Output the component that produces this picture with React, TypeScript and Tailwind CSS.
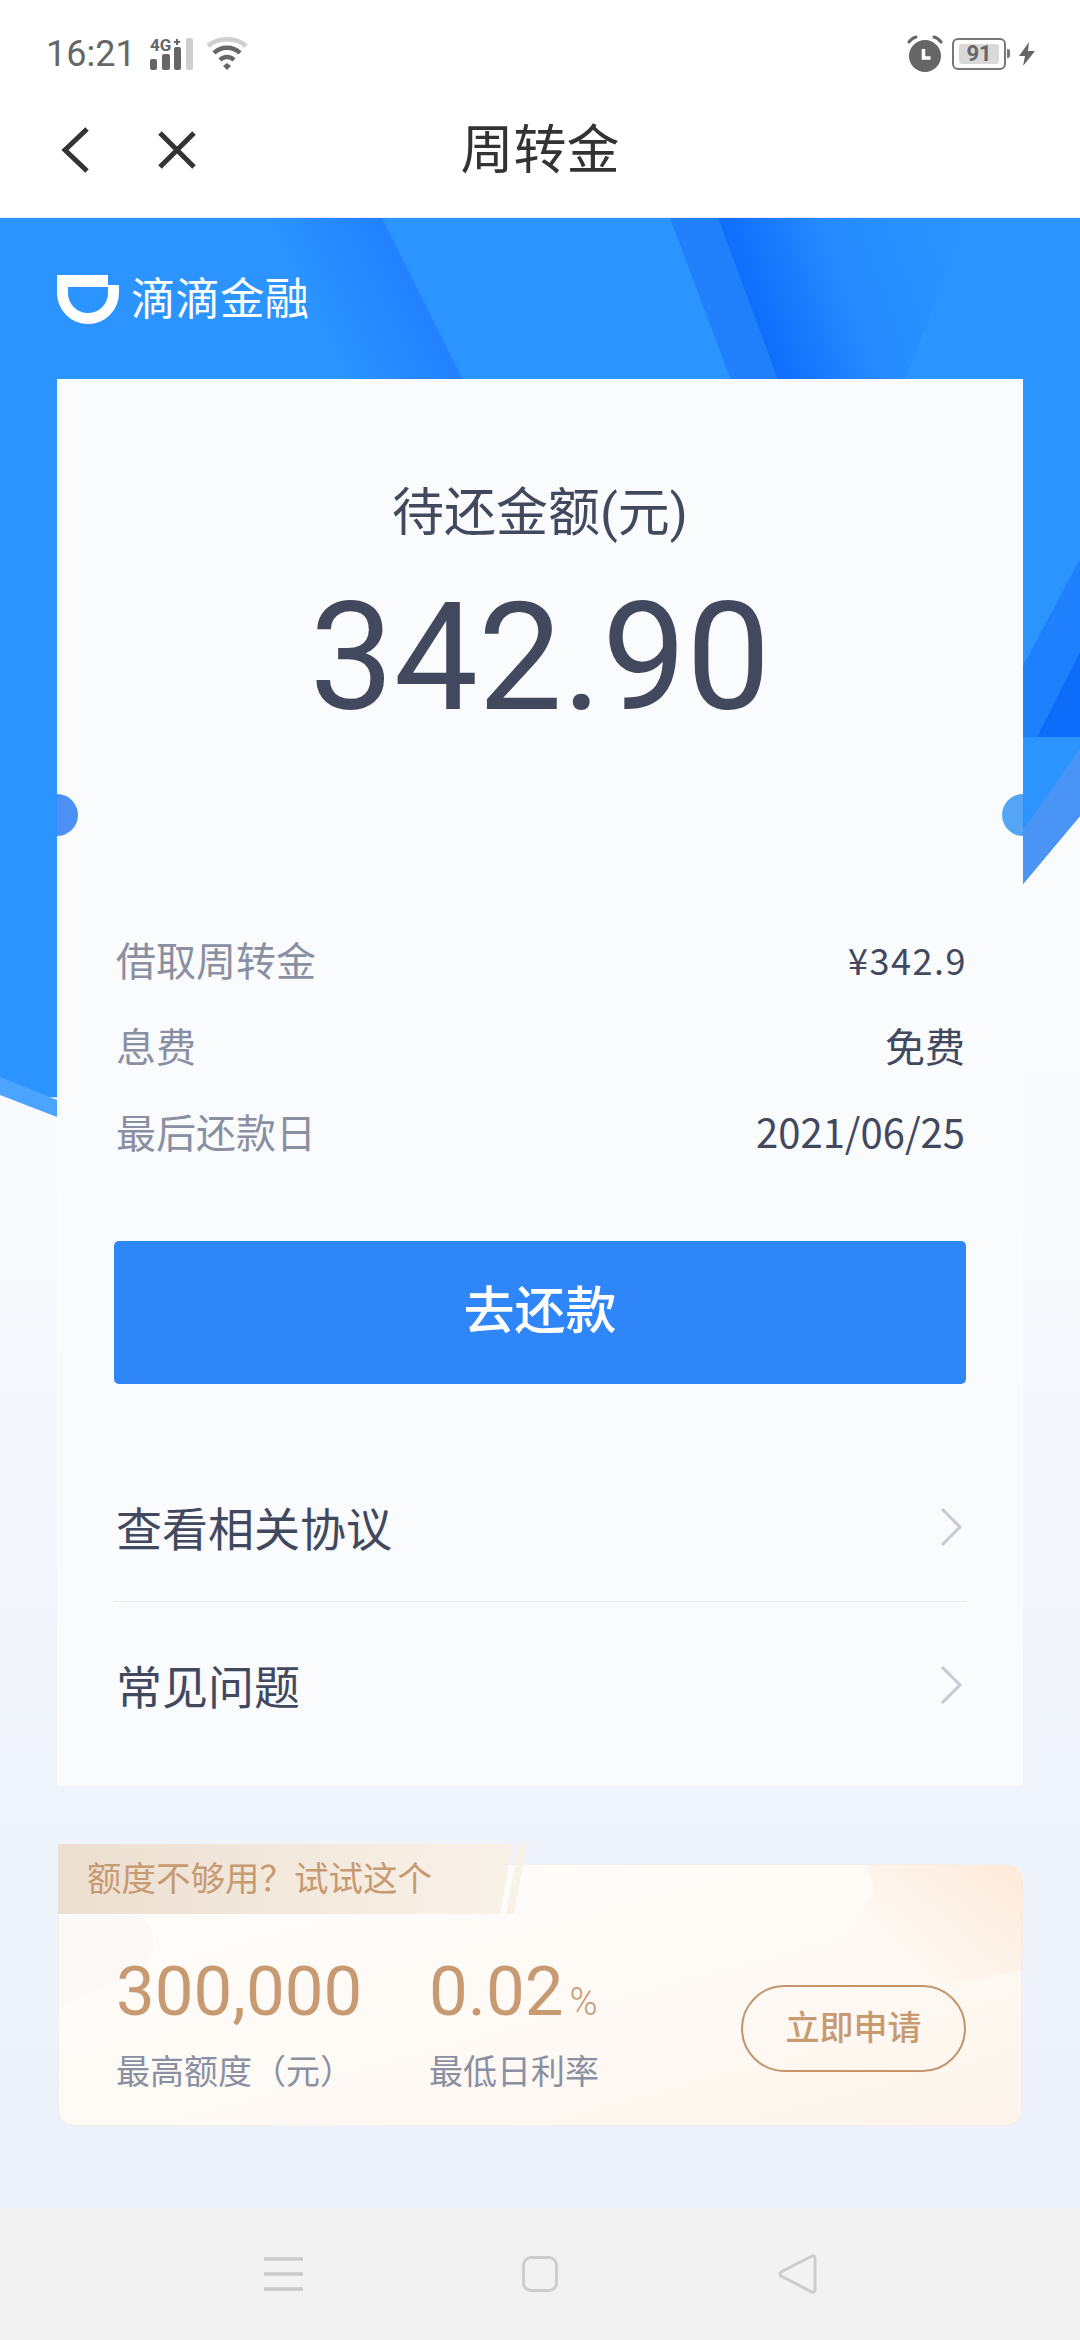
const details = [
  { label: '借取周转金', value: '¥342.9', valueClass: 'mr-[-2px] text-[36px] tracking-[1.5px] text-[#42495f]' },
  { label: '息费', value: '免费', valueClass: 'text-[40px] text-[#42495f]' },
  { label: '最后还款日', value: '2021/06/25', valueClass: 'text-[40px] text-[#42495f]' },
];

const links = ['查看相关协议', '常见问题'];

const StatusBar = () => (
  <div className="flex h-[72px] items-start justify-between pl-[46px] pr-[45px] pt-[35px] text-[#666666]">
    <div className="flex items-center">
      <span className="text-[36px] leading-[38px]">16:21</span>
      <svg width="44" height="42" viewBox="0 -10 44 42" className="ml-[14px] mt-[-10px]">
        <text x="0" y="13" fontSize="17" fontWeight="700" fontFamily="Roboto" fill="#666666">4G</text>
        <path d="M24 4h6M27 1v6" stroke="#666666" strokeWidth="2" />
        <rect x="0" y="21" width="7" height="11" rx="2" fill="#666666" />
        <rect x="12" y="16" width="8" height="16" rx="2" fill="#666666" />
        <rect x="24" y="9" width="7" height="23" rx="2" fill="#666666" />
        <rect x="36" y="0" width="7" height="32" rx="2" fill="#cfcfcf" />
      </svg>
      <svg width="42" height="34" viewBox="0 0 42 34" className="ml-[12px]">
        <path d="M2 9C12 0 30 0 40 9" fill="none" stroke="#cfcfcf" strokeWidth="4.5" />
        <path d="M8 16C15 9 27 9 34 16" fill="none" stroke="#666666" strokeWidth="4.5" />
        <path d="M14 23C18 19 24 19 28 23" fill="none" stroke="#666666" strokeWidth="4.5" />
        <path d="M17 29L21 26L25 29L21 33Z" fill="#666666" />
      </svg>
    </div>
    <div className="flex items-center">
      <svg width="36" height="38" viewBox="0 0 36 38">
        <circle cx="18" cy="21" r="16" fill="#666666" />
        <path d="M2 7Q5 3 9 2M34 7Q31 3 27 2" fill="none" stroke="#666666" strokeWidth="3" strokeLinecap="round" />
        <path d="M16.5 14v9h7" fill="none" stroke="#ffffff" strokeWidth="3.5" />
      </svg>
      <div className="relative ml-[9px] flex h-[32px] w-[54px] items-center justify-center rounded-[6px] border-[2.5px] border-[#777777]">
        <div className="flex h-[20px] w-[40px] items-center justify-center rounded-[3px] bg-[#d9d9d9] text-[22px] font-bold leading-none text-[#666666]">
          91
        </div>
        <div className="absolute right-[-6px] top-[9px] h-[9px] w-[3px] rounded-r-[2px] bg-[#777777]" />
      </div>
      <svg width="16" height="24" viewBox="0 0 16 24" className="ml-[13px]">
        <path d="M10 0L0 14H6L4 24L16 9H9Z" fill="#666666" />
      </svg>
    </div>
  </div>
);

const NavBar = () => (
  <div className="relative flex h-[146px] items-center border-b border-[#e8edf3] bg-white pl-[61px] pt-[10px]">
    <svg width="28" height="46" viewBox="0 0 28 46">
      <path d="M26 2L4 23L26 44" fill="none" stroke="#333333" strokeWidth="5" />
    </svg>
    <svg width="38" height="38" viewBox="0 0 38 38" className="ml-[69px]">
      <path d="M2 2L36 36M36 2L2 36" fill="none" stroke="#333333" strokeWidth="5" />
    </svg>
    <h1 className="absolute inset-x-0 top-[44px] text-center text-[53px] font-normal leading-[70px] text-[#333333]">周转金</h1>
  </div>
);

// the blue header artwork sits behind the card
const HeroArt = () => (
  <svg className="absolute left-0 top-0" width="1080" height="920" viewBox="0 218 1080 920">
    <defs>
      <linearGradient id="fadeLeft" gradientUnits="userSpaceOnUse" x1="330" y1="345" x2="420" y2="300">
        <stop offset="0" stopColor="#2181ff" stopOpacity="0" />
        <stop offset="1" stopColor="#2181ff" />
      </linearGradient>
      <linearGradient id="fadeRight" gradientUnits="userSpaceOnUse" x1="745" y1="300" x2="935" y2="230">
        <stop offset="0" stopColor="#0e6cfb" />
        <stop offset="0.5" stopColor="#258bff" />
        <stop offset="1" stopColor="#2b93ff" />
      </linearGradient>
    </defs>
    <path d="M0 218H1080V816L1023 884V1117Q500 1117 0 1095Z" fill="#2b94ff" />
    <path d="M0 1077L57 1100V1117L0 1095Z" fill="#4ba4ff" />
    <path d="M200 218H382L463 380H200Z" fill="url(#fadeLeft)" />
    <path d="M670 218H718L778 380H731Z" fill="#2080fb" />
    <path d="M718 218H967L905 380H778Z" fill="url(#fadeRight)" />
    <path d="M1023 666L1080 559V737H1023Z" fill="#1f80fd" />
    <path d="M1037 737L1080 652V737Z" fill="#0e6cfb" />
    <path d="M1023 830L1080 749V816L1023 884Z" fill="#4a94f5" />
  </svg>
);

const Logo = () => (
  <div className="flex h-[161px] items-start pl-[57px] pt-[57px]">
    <svg width="62" height="49" viewBox="0 0 62 49">
      <path
        d="M0 0H51V10H62V18A31 31 0 0 1 0 18ZM11 12V18A20 20 0 0 0 51 18V12Z"
        fill="#ffffff"
        fillRule="evenodd"
      />
    </svg>
    <span className="ml-[12px] mt-[-3px] text-[44.5px] leading-[56px] text-white">滴滴金融</span>
  </div>
);

const BillCard = () => (
  <div className="relative mx-[57px] h-[1407px] bg-[#f9fbfd] px-[57px] pt-[103px]">
    <div className="absolute left-0 top-[415px] h-[42px] w-[21px] rounded-r-full bg-[#4a90f5]" />
    <div className="absolute right-0 top-[415px] h-[42px] w-[21px] rounded-l-full bg-[#55a5f7]" />

    <p className="text-center text-[52px] leading-[64px] text-[#42495f]">待还金额(元)</p>
    <p className="mt-[37px] text-center text-[150px] leading-[150px] text-[#42495f]">342.90</p>

    <div className="mt-[183px] font-['Noto_Sans_CJK_SC',sans-serif]">
      {details.map((row) => (
        <div key={row.label} className="flex h-[86px] items-center justify-between pl-[2px] pr-[1px]">
          <span className="text-[40px] leading-[56px] text-[#8a90a2]">{row.label}</span>
          <span className={row.valueClass}>{row.value}</span>
        </div>
      ))}
    </div>

    <button className="mt-[67px] flex h-[143px] w-[852px] items-center justify-center rounded-[5px] bg-[#2f86f9] text-[51px] font-medium text-white">
      去还款
    </button>

    <div className="mt-[75px]">
      {links.map((item, i) => (
        <div
          key={item}
          className={
            i === 0
              ? 'flex h-[143px] items-center justify-between border-b border-[#e9ecf1] pl-[2px]'
              : 'flex h-[172px] items-center justify-between pl-[2px]'
          }
        >
          <span className="text-[46px] text-[#42495f]">{item}</span>
          <svg width="22" height="40" viewBox="0 0 22 40" className="mr-[4px] mt-[-6px]">
            <path d="M2 2L20 20L2 38" fill="none" stroke="#c5cad3" strokeWidth="3" />
          </svg>
        </div>
      ))}
    </div>
  </div>
);

const PromoCard = () => (
  <div className="relative mx-[58px] mt-[78px] h-[262px] rounded-[16px] border border-[#f6efe8] bg-linear-to-br from-[#fffdfb] via-[#fefaf6] to-[#fdf5ec]">
    <svg className="absolute inset-0 rounded-[16px]" width="964" height="262" viewBox="0 0 964 262">
      <defs>
        <linearGradient id="blob" x1="0" y1="1" x2="1" y2="0">
          <stop offset="0.2" stopColor="#fdeee0" stopOpacity="0" />
          <stop offset="1" stopColor="#fde9d8" />
        </linearGradient>
      </defs>
      <path d="M0 50H80C98 60 100 90 80 105C60 118 20 130 0 145Z" fill="#f8f7f5" opacity="0.6" />
      <path d="M805 0H948Q964 0 964 16V105C930 112 890 122 850 120C810 110 790 90 795 60C810 30 825 30 805 0Z" fill="url(#blob)" />
    </svg>
    <svg className="absolute left-[-1px] top-[-21px]" width="472" height="70" viewBox="0 0 472 70">
      <defs>
        <linearGradient id="tagFill" x1="0" y1="0" x2="1" y2="0">
          <stop offset="0" stopColor="#ecdfd1" />
          <stop offset="1" stopColor="#f9f2e9" />
        </linearGradient>
      </defs>
      <path d="M0 0H455L442 70H0Z" fill="url(#tagFill)" />
      <path d="M461 0H469L456 70H448Z" fill="#f9f2e9" />
    </svg>
    <span className="absolute left-[28px] top-[-9px] text-[34.5px] leading-[46px] text-[#c89a72]">{'额度不够用\uFF1F试试这个'}</span>

    <div className="absolute left-[57px] top-[87px] flex">
      <div className="w-[313px]">
        <p className="h-[80px] text-[69px] leading-[80px] text-[#c89a72]">300,000</p>
        <p className="mt-[18px] text-[34px] leading-[44px] text-[#8a90a2]">{'最高额度\uFF08元\uFF09'}</p>
      </div>
      <div>
        <p className="h-[80px] text-[69px] leading-[80px] text-[#c89a72]">
          0.02<span className="ml-[6px] text-[38px] font-light leading-none">%</span>
        </p>
        <p className="mt-[18px] text-[34px] leading-[44px] text-[#8a90a2]">最低日利率</p>
      </div>
    </div>

    <button className="absolute right-[55px] top-[120px] flex h-[87px] w-[225px] items-center justify-center rounded-full border-2 border-[#c4946c] text-[34px] font-medium text-[#c89a72]">
      立即申请
    </button>
  </div>
);

const BottomNav = () => (
  <div className="flex h-[132px] items-center bg-[#f2f2f2] pl-[264px]">
    <svg width="39" height="36" viewBox="0 0 39 36">
      <path d="M0 3H39M0 18H39M0 33H39" stroke="#cacaca" strokeWidth="3.5" />
    </svg>
    <div className="ml-[219px] h-[36px] w-[36px] rounded-[9px] border-[3px] border-[#cdcdcd]" />
    <svg width="40" height="42" viewBox="0 0 40 42" className="ml-[219px]">
      <path
        d="M35 3L4 19Q2 21 4 23L35 39Q38 40 38 36V6Q38 2 35 3Z"
        fill="none"
        stroke="#cdcdcd"
        strokeWidth="3"
      />
    </svg>
  </div>
);

export default function App() {
  return (
    <div className="flex h-[2340px] w-[1080px] flex-col overflow-hidden bg-white font-[Roboto,'Noto_Sans_CJK_SC',sans-serif]">
      <StatusBar />
      <NavBar />
      <main className="relative flex-1 bg-linear-to-b from-[#fafbfd] from-40% to-[#ebf0fb]">
        <HeroArt />
        <div className="relative">
          <Logo />
          <BillCard />
          <PromoCard />
        </div>
      </main>
      <BottomNav />
    </div>
  );
}
